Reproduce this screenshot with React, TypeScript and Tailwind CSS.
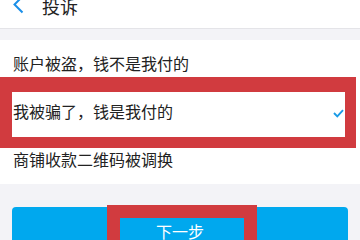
const FONT = { fontFamily: '"Noto Sans CJK SC", "Noto Sans", sans-serif' };

const reasons = ["账户被盗，钱不是我付的", "我被骗了，钱是我付的", "商铺收款二维码被调换"];

export default function App() {
  const selected = 1;

  return (
    <div className="relative w-[360px] h-[240px] overflow-hidden bg-[#f3f3f7] text-[#222]" style={FONT}>
      <header className="h-[29px] bg-white border-b border-[#e4e4e8]">
        <div className="flex items-center h-[12px] pl-[13px]">
          <svg width="11" height="18" viewBox="0 0 11 18" className="overflow-visible -mt-[2px]">
            <path d="M9.5 0.5 L1.5 8.5 L9.5 16.5" fill="none" stroke="#1a8fe8" strokeWidth="2" />
          </svg>
          <span className="ml-[18px] text-[18px] leading-[12px]">投诉</span>
        </div>
      </header>

      <div className="mt-[11px] bg-white">
        {reasons.map((r, i) => (
          <div key={r} className="h-[48px] flex items-center justify-between pl-[13px] pr-[16px] text-[16px]">
            <span className="-mt-[2px]">{r}</span>
            {i === selected && (
              <svg width="11" height="9" viewBox="0 0 11 9" className="mt-[2px]">
                <path d="M1 4 L4.3 7.3 L10 1.2" fill="none" stroke="#1a9be6" strokeWidth="1.9" />
              </svg>
            )}
          </div>
        ))}
      </div>

      <div className="mt-[23px] mx-[12px]">
        <button className="w-full h-[48px] rounded-[4px] bg-[#00a8ee] text-white text-[16px]">下一步</button>
      </div>

      {/* annotation boxes */}
      <div className="absolute left-0 top-[77px] w-[356px] h-[71px] border-[#d13b3f] border-l-[12px] border-t-[15px] border-r-[11px] border-b-[11px]" />
      <div className="absolute left-[107px] top-[205px] w-[150px] h-[60px] border-[#d13b3f] border-[13px]" />
    </div>
  );
}
